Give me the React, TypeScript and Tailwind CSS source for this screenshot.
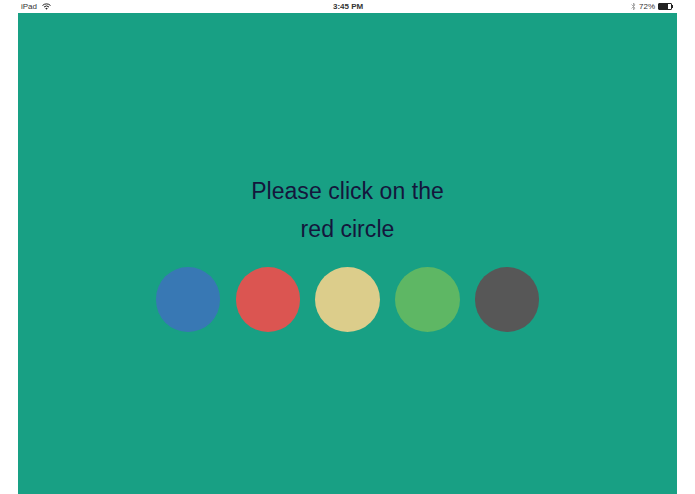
export default function App() {
  const circles = ["bg-[#3878b4]", "bg-[#db5551]", "bg-[#dccd8b]", "bg-[#5eb764]", "bg-[#575757]"];
  return (
    <div className="w-[695px] h-[494px] bg-white flex flex-col overflow-hidden font-['Liberation_Sans',Arial,sans-serif]">
      <div className="h-[13px] shrink-0 pl-[21px] pr-[22px] flex items-center justify-between text-[8px] text-[#333] relative">
        <div className="flex items-center gap-[5px]">
          <span>iPad</span>
          <svg width="9" height="7" viewBox="0 0 18 14" fill="none" stroke="#222" strokeWidth="2">
            <path d="M1 5 A11.5 11.5 0 0 1 17 5" />
            <path d="M4 8 A7.5 7.5 0 0 1 14 8" />
            <path d="M9 13.5 L6.5 10.5 A3.6 3.6 0 0 1 11.5 10.5 Z" fill="#222" stroke="none" />
          </svg>
        </div>
        <span className="absolute left-[333px] top-[1px] font-bold text-[#333]">3:45 PM</span>
        <div className="flex items-center gap-[3px]">
          <svg width="5" height="9" viewBox="0 0 10 18" fill="none" stroke="#999" strokeWidth="1.6">
            <path d="M1 5 L8 12 L5 16 V2 L8 6 L1 13" />
          </svg>
          <span>72%</span>
          <div className="flex items-center">
            <div className="w-[14px] h-[7px] border border-[#222] rounded-[1px] bg-white">
              <div className="w-[9px] h-full bg-[#222]" />
            </div>
            <div className="w-[1px] h-[3px] bg-[#222]" />
          </div>
        </div>
      </div>
      <div className="flex-1 ml-[18px] mr-[18px] bg-[#18a084] flex flex-col items-center pt-[159px]">
        <p className="text-[23px] leading-[38px] tracking-[0.05px] text-[#14163c] text-center">
          Please click on the
          <br />
          red circle
        </p>
        <div className="flex gap-[15.25px] mt-[19px]">
          {circles.map((c) => (
            <div key={c} className={`w-[64.5px] h-[64.5px] rounded-full ${c}`} />
          ))}
        </div>
      </div>
    </div>
  );
}
